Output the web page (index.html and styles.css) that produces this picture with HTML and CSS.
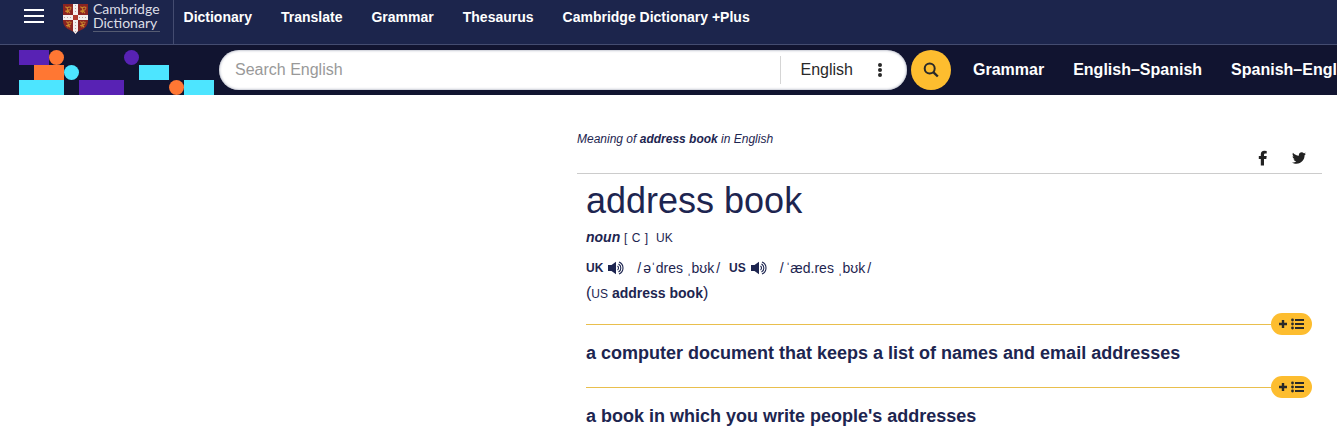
FILE: index.html
```html
<!DOCTYPE html>
<html lang="en">
<head>
<meta charset="utf-8">
<title>address book | Cambridge Dictionary</title>
<link rel="stylesheet" href="styles.css">
</head>
<body>
<svg class="defs" width="0" height="0" aria-hidden="true">
  <symbol id="speaker" viewBox="0 0 16 14">
    <path fill="currentColor" d="M0 4h3.500L8 .8v12.400L3.500 10H0z"/>
    <path fill="none" stroke="currentColor" stroke-width="1.100" d="M9.500 5a2.500 2.500 0 0 1 0 4M10.500 3a4.600 4.600 0 0 1 0 8M11 1a6.500 6.500 0 0 1 0 12"/>
  </symbol>
  <symbol id="add-list" viewBox="0 0 26 12">
    <path fill="none" stroke="currentColor" stroke-width="2.400" d="M0 6h8M4 2v8"/>
    <path fill="none" stroke="currentColor" stroke-width="1.800" d="M16 2h9M16 6h9M16 10h9"/>
    <g fill="currentColor"><circle cx="13.500" cy="2" r="1.400"/><circle cx="13.500" cy="6" r="1.400"/><circle cx="13.500" cy="10" r="1.400"/></g>
  </symbol>
  <symbol id="lion" viewBox="0 0 10 11">
    <path fill="none" stroke="#c98a2c" stroke-width="1.300" d="M2 2l2 1 3-1M4 3l1 3-3 1M5 6l3-1M5 6l-1 3M5 6l2 3M8 2v2"/>
  </symbol>
</svg>
<header>
  <div class="topbar">
    <div class="brand">
      <button class="menu" type="button" aria-label="Menu"><span></span><span></span><span></span></button>
      <a class="logo" href="#">
        <svg width="25" height="30" viewBox="0 0 25 30" aria-hidden="true">
          <path fill="#8c2422" d="M0 0h25v17q0 7-9 10-3 1-3.500 3Q12 28 9 27 0 24 0 17z"/>
          <use href="#lion" x="0" y="1" width="10" height="10"/><use href="#lion" x="15" y="1" width="10" height="10"/>
          <use href="#lion" x="1" y="16" width="9" height="9"/><use href="#lion" x="15" y="16" width="9" height="9"/>
          <path fill="#f3efee" d="M10 0h5v11h10v5H15v11l-2.500 3L10 27V16H0v-5h10z"/>
          <path fill="none" stroke="#b8a2a2" stroke-width="1" stroke-dasharray="1 2" d="M12.500 1v9M12.500 18v10M1 13.500h8M16 13.500h8"/>
          <path fill="#b03a2e" d="M10 11h5v5h-5z"/>
        </svg>
        <span class="wordmark"><span>Cambridge</span><span>Dictionary</span></span>
      </a>
    </div>
    <nav class="main-nav" aria-label="Main">
      <a href="#">Dictionary</a><a href="#">Translate</a><a href="#">Grammar</a><a href="#">Thesaurus</a><a href="#">Cambridge Dictionary +Plus</a>
    </nav>
  </div>
  <div class="searchbar">
    <svg class="pattern" width="195" height="45" viewBox="0 0 195 45" aria-hidden="true">
      <path fill="#5822b4" d="M0 0h30v15H0zM60 30h45v15H60z"/>
      <path fill="#ff7733" d="M15 15h30v15H15z"/>
      <path fill="#4de5ff" d="M0 30h45v15H0zM120 15h30v15h-30zM165 30h30v15h-30z"/>
      <circle cx="37.500" cy="7.500" r="7.500" fill="#ff7733"/><circle cx="52.500" cy="22.500" r="7.500" fill="#4de5ff"/>
      <circle cx="112.500" cy="7.500" r="7.500" fill="#5822b4"/><circle cx="157.500" cy="37.500" r="7.500" fill="#ff7733"/>
    </svg>
    <form class="search">
      <div class="field">
        <input type="text" placeholder="Search English" aria-label="Search English">
        <button class="language" type="button">English
          <svg width="6" height="14" viewBox="0 0 6 14" fill="currentColor" aria-hidden="true"><circle cx="3" cy="2" r="2"/><circle cx="3" cy="7" r="2"/><circle cx="3" cy="12" r="2"/></svg>
        </button>
      </div>
      <button class="go" type="submit" aria-label="Search">
        <svg width="16" height="16" viewBox="0 0 16 16" fill="none" stroke="currentColor" aria-hidden="true"><circle cx="6.700" cy="6.500" r="5" stroke-width="2"/><path stroke-width="2.400" d="M10.300 10.200l4.500 4.300"/></svg>
      </button>
    </form>
    <nav class="sub-nav" aria-label="Dictionaries">
      <a href="#">Grammar</a><a href="#">English–Spanish</a><a href="#">Spanish–English</a>
    </nav>
  </div>
</header>
<main>
  <p class="meaning">Meaning of <b>address book</b> in English</p>
  <div class="share">
    <a href="#" aria-label="Share on Facebook"><svg width="10" height="16" viewBox="0 0 10 16" fill="currentColor" aria-hidden="true"><path d="M2.800 15.500V9H.8V6h2V4.300Q2.800.8 6.300.8q1.500 0 2.400.2v2.600H7.300Q6 3.600 6 4.800V6h2.700l-.4 3H6v6.500z"/></svg></a>
    <a href="#" aria-label="Share on Twitter"><svg width="14" height="14" viewBox="0 0 512 512" fill="currentColor" aria-hidden="true"><path d="M459 152c.3 4.500.3 9 .3 13.600 0 138.700-105.600 298.600-298.600 298.600C101 464 46 447 0 417c8.400 1 16.600 1.300 25.300 1.300 49 0 94-16.600 130.300-44.800-46-1-85-31.200-98.100-72.800 6.500 1 13 1.600 19.800 1.600 9.400 0 18.800-1.300 27.600-3.600C56.800 289 20.800 247 20.800 196v-1.300c14 7.800 30.200 12.700 47.400 13.300C40 189 21.400 157 21.400 120.600c0-19.500 5.200-37.400 14.300-53C87.400 131.300 165 173 252 177.400c-1.600-7.800-2.600-15.900-2.600-24C249.500 95.600 296.300 48.400 354.500 48.400c30.200 0 57.500 12.700 76.700 33.100 23.700-4.500 46.400-13.300 66.600-25.300-7.800 24.400-24.400 44.800-46.100 57.800 21-2.300 41.600-8.100 60.400-16.200-14.300 20.800-32.200 39.300-52.600 54.300z"/></svg></a>
  </div>
  <article class="entry">
    <h1>address book</h1>
    <p class="grammar"><b>noun</b> <span class="code">[ C ]</span> <span class="region">UK</span></p>
    <div class="pron">
      <b>UK</b><button type="button" aria-label="Listen, UK"><svg width="16" height="14" aria-hidden="true"><use href="#speaker"/></svg></button><span class="ipa"><span>/</span>əˈdres ˌbʊk<span>/</span></span>
      <b>US</b><button type="button" aria-label="Listen, US"><svg width="16" height="14" aria-hidden="true"><use href="#speaker"/></svg></button><span class="ipa"><span>/</span>ˈæd.res ˌbʊk<span>/</span></span>
    </div>
    <p class="variant"><span class="paren">(</span><span class="us">US</span> <b>address book</b><span class="paren">)</span></p>
    <section>
      <div class="rule"><button type="button" aria-label="Add to word list"><svg width="26" height="12" aria-hidden="true"><use href="#add-list"/></svg></button></div>
      <h2>a computer document that keeps a list of names and email addresses</h2>
    </section>
    <section>
      <div class="rule"><button type="button" aria-label="Add to word list"><svg width="26" height="12" aria-hidden="true"><use href="#add-list"/></svg></button></div>
      <h2>a book in which you write people's addresses</h2>
    </section>
  </article>
</main>
</body>
</html>
```
FILE: styles.css
```css
* { box-sizing: border-box; }
body {
  margin: 0;
  background: #fff;
  color: #1d2550;
  font-family: "Liberation Sans", Arial, sans-serif;
  font-size: 14px;
  overflow-x: hidden;
}
h1, h2, p { margin: 0; }
a { color: inherit; text-decoration: none; }
button { border: 0; padding: 0; background: none; color: inherit; font: inherit; cursor: pointer; }
svg { display: block; flex: none; }
.defs { position: absolute; }

.topbar {
  display: flex;
  height: 45px;
  background: #1c254c;
  border-bottom: 1px solid #444c70;
  color: #fff;
}
.brand {
  display: flex;
  align-items: flex-start;
  gap: 19px;
  padding: 2px 13px 0 24px;
  border-right: 1px solid #444c70;
}
.menu { display: flex; flex-direction: column; gap: 4px; padding-top: 7px; }
.menu span { width: 20px; height: 2px; background: #fff; }
.logo { display: flex; align-items: flex-start; gap: 5px; }
.logo svg { margin-top: 2px; }
.wordmark {
  display: flex;
  flex-direction: column;
  padding-bottom: 1px;
  border-bottom: 1px solid #555b72;
  color: #dcdee6;
  font: 14px/14px Lato, sans-serif;
}
.main-nav { display: flex; gap: 29px; padding: 7px 10px; font-weight: bold; line-height: 20px; white-space: nowrap; }

.searchbar {
  display: flex;
  align-items: center;
  height: 50px;
  padding-left: 19px;
  background: #111430;
  color: #fff;
  overflow: hidden;
}
.pattern { align-self: flex-end; }
.search { display: flex; flex: 1; gap: 4px; min-width: 400px; margin-left: 5px; }
.field {
  display: flex;
  flex: 1;
  align-items: center;
  height: 40px;
  border-radius: 20px;
  background: #fff;
  box-shadow: inset 0 0 3px #8d93a8;
}
.field input {
  flex: 1;
  min-width: 0;
  padding: 0 16px;
  border: 0;
  outline: 0;
  background: none;
  color: #222;
  font: 16px "Liberation Sans", Arial, sans-serif;
}
.field input::placeholder { color: #999; opacity: 1; }
.language {
  display: flex;
  align-items: center;
  gap: 24px;
  height: 28px;
  padding: 0 24px 0 20px;
  border-left: 1px solid #d5d5d5;
  color: #292929;
  font-size: 16px;
}
.go {
  display: grid;
  place-items: center;
  width: 40px;
  height: 40px;
  border-radius: 50%;
  background: #fdbd2f;
  color: #292929;
}
.sub-nav { display: flex; flex: none; gap: 29px; width: 386px; padding-left: 22px; font-size: 16px; font-weight: bold; white-space: nowrap; }

main { margin: 36px 15px 0 577px; }
.meaning { font-size: 12px; font-style: italic; line-height: 16px; }
.share {
  display: flex;
  justify-content: flex-end;
  align-items: center;
  gap: 24px;
  height: 27px;
  padding: 0 16px 4px 0;
  border-bottom: 1px solid #ccc;
  color: #222;
}
.entry { padding: 5px 10px 20px 9px; }
h1 { font-size: 36px; font-weight: normal; line-height: 44px; }
.grammar { margin-top: 4px; line-height: 20px; }
.grammar b { font-style: italic; }
.code, .region { font-size: 12px; }
.code { word-spacing: 1px; }
.region { margin-left: 4px; }
.pron { display: flex; align-items: center; margin-top: 10px; line-height: 20px; }
.pron b { font-size: 12px; }
.pron button { margin: 0 13px 0 5px; }
.ipa { display: flex; gap: 2px; margin-right: 9px; white-space: pre; }
.variant { margin-top: 5px; line-height: 20px; }
.paren { font-size: 16px; }
.us { font-size: 12px; }
section { margin-top: 9px; }
section + section { margin-top: 11px; }
.rule { display: flex; align-items: center; }
.rule::before { content: ""; flex: 1; height: 1px; background: #e9bf4d; }
.rule button { display: grid; place-items: center; width: 41px; height: 22px; border-radius: 11px; background: #fdbd2f; color: #292929; }
h2 { margin-top: 6px; font-size: 18px; line-height: 24px; }
```
